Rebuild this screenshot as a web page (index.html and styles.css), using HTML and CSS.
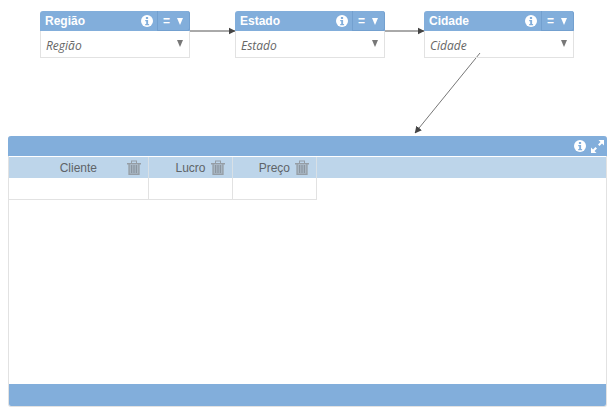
FILE: index.html
```html
<!DOCTYPE html>
<html lang="en">
<head>
  <meta charset="UTF-8">
  <title>Consulta</title>
  <link rel="stylesheet" href="styles.css">
</head>
<body>

  <svg width="0" height="0" class="defs">
    <defs>
      <symbol id="info" viewBox="0 0 12 12">
        <circle cx="6" cy="6" r="6" fill="#fff"/>
        <rect x="4.900" y="2" width="2.200" height="2" fill="#82aedb"/>
        <path d="M4.200 5h2.900v4h1v1.200H4.200V9h1V6.200h-1z" fill="#82aedb"/>
      </symbol>
      <symbol id="trash" viewBox="0 0 14 15">
        <path d="M0 3h14v1.500H0zM4 3V0.500h6V3H9V1.500H5V3z" fill="#959da5"/>
        <path d="M1.500 4h11v11h-11z" fill="#a9b7c4"/>
        <path d="M1.500 4h1.200v9.800h8.600V4h1.200v11h-11z" fill="#959da5"/>
        <path d="M4 5h1.200v8H4zM6.400 5h1.200v8H6.400zM8.800 5H10v8H8.800z" fill="#8b96a0"/>
      </symbol>
    </defs>
  </svg>

  <div class="canvas">
    <svg class="links" width="615" height="136">
      <defs>
        <marker id="head" markerUnits="userSpaceOnUse" markerWidth="7" markerHeight="8" refX="6.500" refY="4" orient="auto">
          <path d="M0 0.500L7 4L0 7.500z" fill="#444"/>
        </marker>
      </defs>
      <line x1="189" y1="31" x2="235" y2="31" stroke="#555" marker-end="url(#head)"/>
      <line x1="384" y1="31" x2="424" y2="31" stroke="#555" marker-end="url(#head)"/>
      <line x1="480" y1="53" x2="415" y2="133" stroke="#777" marker-end="url(#head)"/>
    </svg>

    <div class="node node-regiao">
      <div class="node-head">
        <span class="node-title">Região</span>
        <svg class="info"><use href="#info"/></svg>
        <span class="node-op"><span>=</span><span class="tri"></span></span>
      </div>
      <div class="node-body"><em>Região</em><span class="tri tri-grey"></span></div>
    </div>

    <div class="node node-estado">
      <div class="node-head">
        <span class="node-title">Estado</span>
        <svg class="info"><use href="#info"/></svg>
        <span class="node-op"><span>=</span><span class="tri"></span></span>
      </div>
      <div class="node-body"><em>Estado</em><span class="tri tri-grey"></span></div>
    </div>

    <div class="node node-cidade">
      <div class="node-head">
        <span class="node-title">Cidade</span>
        <svg class="info"><use href="#info"/></svg>
        <span class="node-op"><span>=</span><span class="tri"></span></span>
      </div>
      <div class="node-body"><em>Cidade</em><span class="tri tri-grey"></span></div>
    </div>
  </div>

  <div class="panel">
    <div class="panel-head">
      <svg class="info"><use href="#info"/></svg>
      <svg class="expand" viewBox="0 0 13 13">
        <path d="M7.500 0H13v5.500L11 3.500 8.500 6 7 4.500 9.500 2zM0 13V7.500L2 9.500 4.500 7 6 8.500 3.500 11 5.500 13z" fill="#fff"/>
      </svg>
    </div>
    <div class="panel-main">
      <div class="cols">
        <div class="col col-cliente"><span>Cliente</span><svg class="trash"><use href="#trash"/></svg></div>
        <div class="col col-lucro"><span>Lucro</span><svg class="trash"><use href="#trash"/></svg></div>
        <div class="col col-preco"><span>Preço</span><svg class="trash"><use href="#trash"/></svg></div>
      </div>
      <div class="row">
        <div class="cell col-cliente"></div>
        <div class="cell col-lucro"></div>
        <div class="cell col-preco"></div>
      </div>
    </div>
    <div class="panel-foot"></div>
  </div>

</body>
</html>
```

FILE: styles.css
```css
body {
  margin: 0;
  background: #fff;
  font-family: 'Liberation Sans', Arial, sans-serif;
}

.defs {
  position: absolute;
}

.canvas {
  position: relative;
  height: 136px;
}

.links {
  position: absolute;
  left: 0;
  top: 0;
}

.node {
  position: absolute;
  top: 11px;
  width: 150px;
  box-sizing: border-box;
}

.node-regiao { left: 40px; }
.node-estado { left: 235px; }
.node-cidade { left: 424px; }

.node-head {
  display: flex;
  align-items: center;
  height: 20px;
  background: #82aedb;
  border-radius: 3px 3px 0 0;
  color: #fff;
  padding-left: 5px;
}

.node-title {
  flex: 1;
  font-size: 12px;
  font-weight: bold;
}

.info {
  width: 12px;
  height: 12px;
}

.node-head .info {
  margin-right: 4px;
}

.node-op {
  display: flex;
  align-items: center;
  gap: 7px;
  box-sizing: border-box;
  width: 33px;
  height: 20px;
  padding-left: 5px;
  border-left: 1px solid #73a0cf;
  box-shadow: inset 0 -1px 0 #73a0cf, inset -1px 0 0 #73a0cf;
  border-radius: 0 3px 3px 0;
  font-size: 12px;
  font-weight: bold;
}

.tri {
  width: 0;
  height: 0;
  border-left: 3.500px solid transparent;
  border-right: 3.500px solid transparent;
  border-top: 7px solid #fff;
}

.tri-grey {
  border-top-color: #777;
  margin-top: -3px;
  margin-right: 6px;
}

.node-body {
  display: flex;
  align-items: center;
  justify-content: space-between;
  box-sizing: border-box;
  height: 27px;
  padding: 2px 0 0 5px;
  border: 1px solid #e2e2e2;
  border-top: 0;
  font-family: 'Open Sans', sans-serif;
  font-size: 12px;
  color: #666;
}

.panel {
  margin: 0 8px;
  height: 271px;
  display: flex;
  flex-direction: column;
  box-sizing: border-box;
  border: 1px solid #e2e2e2;
  border-top: 0;
  border-radius: 3px;
}

.panel-head {
  display: flex;
  align-items: center;
  justify-content: flex-end;
  gap: 5px;
  height: 20px;
  margin: 0 -1px 1px;
  padding-right: 3px;
  background: #82aedb;
  border-radius: 3px 3px 0 0;
}

.expand {
  width: 13px;
  height: 13px;
}

.panel-main {
  flex: 1;
}

.cols {
  display: flex;
  height: 21px;
  background: #bdd5ea;
}

.col {
  display: flex;
  align-items: center;
  justify-content: flex-end;
  gap: 5px;
  box-sizing: border-box;
  padding-right: 7px;
  border-right: 1px solid #d8e0e6;
  font-size: 12px;
  color: #5f6468;
}

.col-cliente { width: 140px; }
.col-lucro { width: 84px; }
.col-preco { width: 84px; }

.col-cliente span {
  margin-right: 25px;
}

.col-lucro span {
  margin-right: 0.500px;
}

.trash {
  width: 14px;
  height: 15px;
}

.row {
  display: flex;
  height: 22px;
}

.cell {
  box-sizing: border-box;
  border-right: 1px solid #e2e2e2;
  border-bottom: 1px solid #e2e2e2;
}

.panel-foot {
  height: 22px;
  background: #82aedb;
  border-radius: 0 0 2px 2px;
}
```
